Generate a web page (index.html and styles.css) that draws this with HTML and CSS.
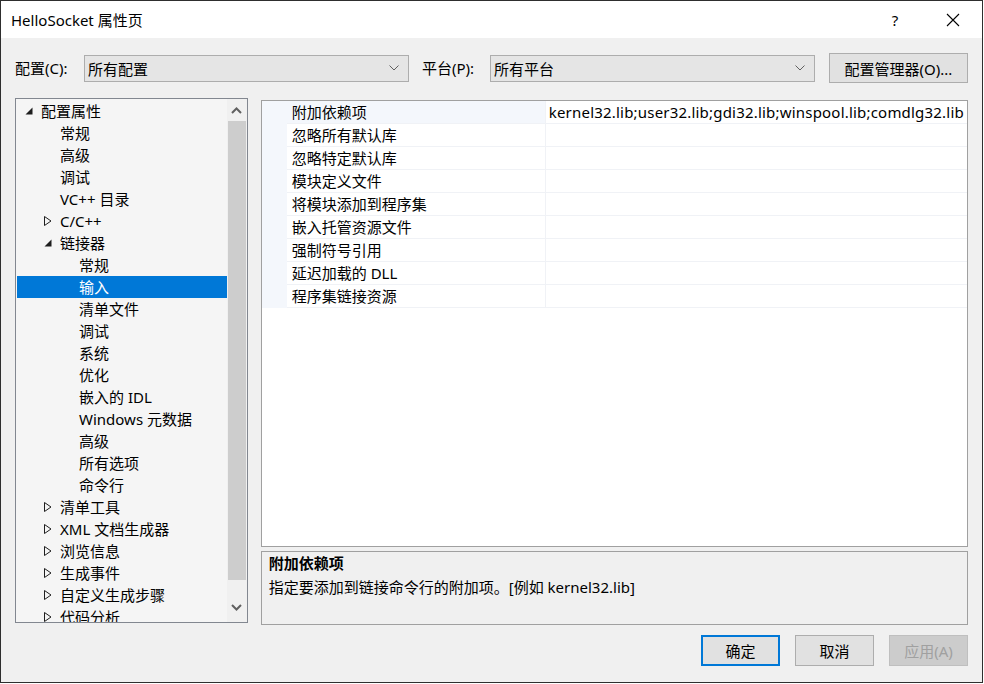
FILE: index.html
```html
<!DOCTYPE html>
<html lang="zh-CN">
<head>
    <meta charset="UTF-8">
    <title>HelloSocket 属性页</title>
    <link rel="stylesheet" href="styles.css">
</head>
<body>
    <div class="window">
        <div class="titlebar">
            <span class="title">HelloSocket 属性页</span>
            <div class="title-btns">
                <span class="help">?</span>
                <span class="close">
                    <svg width="14" height="14" viewBox="0 0 14 14"><path d="M1 1L13 13M13 1L1 13" stroke="#000" stroke-width="1.1" fill="none"/></svg>
                </span>
            </div>
        </div>

        <div class="toolbar">
            <label class="tb-label">配置(C):</label>
            <div class="combo combo-config">
                <span>所有配置</span>
                <svg class="chev" width="10" height="6" viewBox="0 0 10 6"><path d="M0.5 0.5L5 5L9.5 0.5" stroke="#606060" fill="none"/></svg>
            </div>
            <label class="tb-label tb-platform">平台(P):</label>
            <div class="combo combo-platform">
                <span>所有平台</span>
                <svg class="chev" width="10" height="6" viewBox="0 0 10 6"><path d="M0.5 0.5L5 5L9.5 0.5" stroke="#606060" fill="none"/></svg>
            </div>
            <button class="btn btn-manager">配置管理器(O)...</button>
        </div>

        <div class="main">
            <div class="tree">
                <div class="tree-items">
                    <div class="node l0"><span class="tw"><svg width="8" height="8" viewBox="0 0 8 8"><path d="M7.5 0.5V7.5H0.5Z" fill="#1e1e1e"/></svg></span>配置属性</div>
                    <div class="node l1"><span class="tw"></span>常规</div>
                    <div class="node l1"><span class="tw"></span>高级</div>
                    <div class="node l1"><span class="tw"></span>调试</div>
                    <div class="node l1"><span class="tw"></span>VC++ 目录</div>
                    <div class="node l1"><span class="tw"><svg width="8" height="10" viewBox="0 0 8 10"><path d="M0.5 0.5L7 5L0.5 9.5Z" stroke="#1e1e1e" fill="none"/></svg></span>C/C++</div>
                    <div class="node l1"><span class="tw"><svg width="8" height="8" viewBox="0 0 8 8"><path d="M7.5 0.5V7.5H0.5Z" fill="#1e1e1e"/></svg></span>链接器</div>
                    <div class="node l2"><span class="tw"></span>常规</div>
                    <div class="node l2 selected"><span class="tw"></span>输入</div>
                    <div class="node l2"><span class="tw"></span>清单文件</div>
                    <div class="node l2"><span class="tw"></span>调试</div>
                    <div class="node l2"><span class="tw"></span>系统</div>
                    <div class="node l2"><span class="tw"></span>优化</div>
                    <div class="node l2"><span class="tw"></span>嵌入的 IDL</div>
                    <div class="node l2"><span class="tw"></span>Windows 元数据</div>
                    <div class="node l2"><span class="tw"></span>高级</div>
                    <div class="node l2"><span class="tw"></span>所有选项</div>
                    <div class="node l2"><span class="tw"></span>命令行</div>
                    <div class="node l1"><span class="tw"><svg width="8" height="10" viewBox="0 0 8 10"><path d="M0.5 0.5L7 5L0.5 9.5Z" stroke="#1e1e1e" fill="none"/></svg></span>清单工具</div>
                    <div class="node l1"><span class="tw"><svg width="8" height="10" viewBox="0 0 8 10"><path d="M0.5 0.5L7 5L0.5 9.5Z" stroke="#1e1e1e" fill="none"/></svg></span>XML 文档生成器</div>
                    <div class="node l1"><span class="tw"><svg width="8" height="10" viewBox="0 0 8 10"><path d="M0.5 0.5L7 5L0.5 9.5Z" stroke="#1e1e1e" fill="none"/></svg></span>浏览信息</div>
                    <div class="node l1"><span class="tw"><svg width="8" height="10" viewBox="0 0 8 10"><path d="M0.5 0.5L7 5L0.5 9.5Z" stroke="#1e1e1e" fill="none"/></svg></span>生成事件</div>
                    <div class="node l1"><span class="tw"><svg width="8" height="10" viewBox="0 0 8 10"><path d="M0.5 0.5L7 5L0.5 9.5Z" stroke="#1e1e1e" fill="none"/></svg></span>自定义生成步骤</div>
                    <div class="node l1"><span class="tw"><svg width="8" height="10" viewBox="0 0 8 10"><path d="M0.5 0.5L7 5L0.5 9.5Z" stroke="#1e1e1e" fill="none"/></svg></span>代码分析</div>
                </div>
                <div class="vscroll">
                    <div class="arrow">
                        <svg width="11" height="7" viewBox="0 0 11 7"><path d="M1 6L5.5 1.5L10 6" stroke="#606060" stroke-width="2" fill="none"/></svg>
                    </div>
                    <div class="thumb"></div>
                    <div class="arrow">
                        <svg width="11" height="7" viewBox="0 0 11 7"><path d="M1 1L5.5 5.5L10 1" stroke="#606060" stroke-width="2" fill="none"/></svg>
                    </div>
                </div>
            </div>

            <div class="right">
                <div class="grid">
                    <div class="prop first"><div class="margin"></div><div class="name">附加依赖项</div><div class="value">kernel32.lib;user32.lib;gdi32.lib;winspool.lib;comdlg32.lib</div></div>
                    <div class="prop"><div class="margin"></div><div class="name">忽略所有默认库</div><div class="value"></div></div>
                    <div class="prop"><div class="margin"></div><div class="name">忽略特定默认库</div><div class="value"></div></div>
                    <div class="prop"><div class="margin"></div><div class="name">模块定义文件</div><div class="value"></div></div>
                    <div class="prop"><div class="margin"></div><div class="name">将模块添加到程序集</div><div class="value"></div></div>
                    <div class="prop"><div class="margin"></div><div class="name">嵌入托管资源文件</div><div class="value"></div></div>
                    <div class="prop"><div class="margin"></div><div class="name">强制符号引用</div><div class="value"></div></div>
                    <div class="prop"><div class="margin"></div><div class="name">延迟加载的 DLL</div><div class="value"></div></div>
                    <div class="prop"><div class="margin"></div><div class="name">程序集链接资源</div><div class="value"></div></div>
                </div>
                <div class="desc">
                    <div class="desc-title">附加依赖项</div>
                    <div class="desc-text">指定要添加到链接命令行的附加项。[例如 kernel32.lib]</div>
                </div>
            </div>
        </div>

        <div class="footer">
            <button class="btn btn-ok">确定</button>
            <button class="btn">取消</button>
            <button class="btn" disabled>应用(A)</button>
        </div>
    </div>
</body>
</html>
```

FILE: styles.css
```css
* {
    margin: 0;
    padding: 0;
    box-sizing: border-box;
}

body {
    font-family: "Noto Sans", "Noto Sans CJK SC", sans-serif;
    font-size: 15px;
    color: #000;
    background: #fff;
}

.window {
    width: 983px;
    height: 683px;
    border: 1px solid #2e2e2e;
    background: #f0f0f0;
    display: flex;
    flex-direction: column;
}

/* Title bar */
.titlebar {
    height: 37px;
    background: #fff;
    display: flex;
    align-items: center;
    justify-content: space-between;
    padding-left: 10px;
}

.title {
    font-size: 15px;
    line-height: 20px;
}

.title-btns {
    display: flex;
    align-items: center;
    height: 100%;
}

.help {
    width: 46px;
    text-align: center;
    font-size: 15px;
    margin-right: 12px;
}

.close {
    width: 46px;
    height: 100%;
    display: flex;
    align-items: center;
    justify-content: center;
    margin-right: 6px;
}

/* Config row */
.toolbar {
    display: flex;
    align-items: center;
    height: 60px;
    padding: 0 14px;
}

.tb-label {
    width: 69px;
    line-height: 20px;
}

.tb-platform {
    margin-left: 13px;
    width: 68px;
}

.combo {
    width: 325px;
    height: 27px;
    border: 1px solid #adadad;
    background: #e5e5e5;
    display: flex;
    align-items: center;
    justify-content: space-between;
    padding: 0 9px 0 3px;
}

.chev {
    display: block;
}

.btn {
    font-family: "Noto Sans", "Noto Sans CJK SC", sans-serif;
    font-size: 15px;
    color: #000;
    background: #e1e1e1;
    border: 1px solid #adadad;
    height: 31px;
    width: 79px;
}

.btn-manager {
    width: 139px;
    height: 30px;
    margin-left: 14px;
}

.btn:disabled {
    color: #a0a0a0;
    background: #cccccc;
    border-color: #bfbfbf;
}

.btn-ok {
    border: 2px solid #0078d7;
}

/* Main area */
.main {
    display: flex;
    padding: 0 14px;
    height: 527px;
}

.tree {
    width: 233px;
    height: 525px;
    border: 1px solid #828790;
    background: #f5f5f5;
    display: flex;
    overflow: hidden;
}

.tree-items {
    flex: 1;
    padding: 1px 0 0 1px;
    overflow: hidden;
}

.node {
    height: 22px;
    display: flex;
    align-items: center;
    white-space: nowrap;
    line-height: 22px;
}

.node.l0 { padding-left: 8px; }
.node.l1 { padding-left: 27px; }
.node.l2 { padding-left: 46px; }

.node.selected {
    background: #0078d7;
    color: #fff;
}

.tw {
    width: 16px;
    height: 22px;
    display: flex;
    align-items: center;
    flex-shrink: 0;
}

.tw svg {
    display: block;
}

.vscroll {
    width: 20px;
    background: #f0f0f0;
    display: flex;
    flex-direction: column;
    align-items: center;
}

.vscroll .arrow {
    height: 22px;
    width: 100%;
    display: flex;
    align-items: center;
    justify-content: center;
}

.vscroll .thumb {
    width: 18px;
    height: 459px;
    background: #cdcdcd;
}

.vscroll .arrow:last-child {
    margin-top: auto;
    height: 30px;
}

.right {
    margin-left: 13px;
    margin-top: 2px;
    width: 708px;
    display: flex;
    flex-direction: column;
}

/* Property grid */
.grid {
    height: 447px;
    border: 1px solid #a0a0a0;
    background: #fff;
    overflow: hidden;
}

.prop {
    display: flex;
    height: 23px;
    line-height: 22px;
}

.prop .margin {
    width: 25px;
    background: #f4f7fc;
    flex-shrink: 0;
}

.prop .name {
    width: 259px;
    padding-left: 5px;
    border-bottom: 1px solid #f0f2f6;
    border-right: 1px solid #f0f2f6;
    flex-shrink: 0;
    white-space: nowrap;
}

.prop .value {
    flex: 1;
    padding-left: 3px;
    border-bottom: 1px solid #f0f2f6;
    white-space: nowrap;
    overflow: hidden;
    letter-spacing: 0.2px;
}

.prop.first .name {
    background: #f4f7fc;
}

/* Description */
.desc {
    margin-top: 4px;
    height: 74px;
    border: 1px solid #a0a0a0;
    padding: 0 7px;
}

.desc-title {
    font-weight: bold;
    line-height: 22px;
}

.desc-text {
    line-height: 24px;
    margin-top: 1px;
}

/* Buttons */
.footer {
    display: flex;
    justify-content: flex-end;
    gap: 15px;
    padding: 10px 14px 0;
}
```
